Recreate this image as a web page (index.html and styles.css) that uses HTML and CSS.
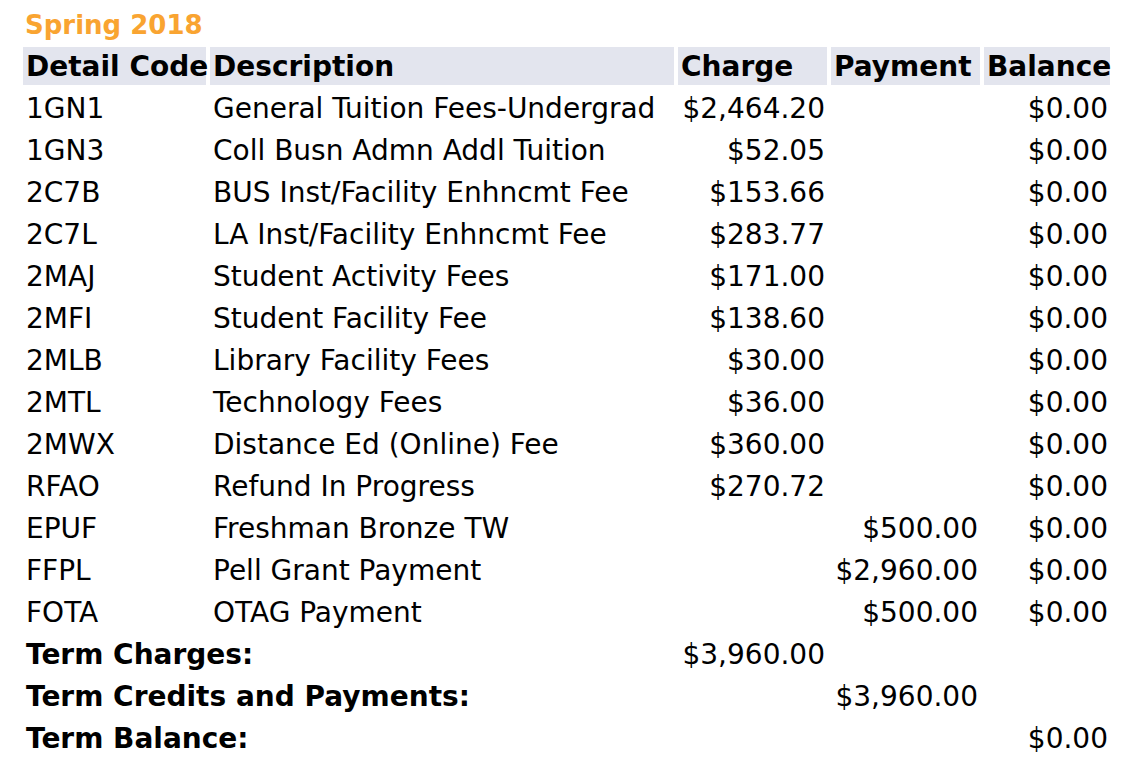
FILE: index.html
```html
<!DOCTYPE html>
<html>
<head>
<meta charset="utf-8">
<link rel="stylesheet" href="styles.css">
</head>
<body>
<div class="term-title">Spring 2018</div>
<table class="acct">
  <colgroup>
    <col class="c-code"><col class="c-desc"><col class="c-chg"><col class="c-pay"><col class="c-bal">
  </colgroup>
  <thead>
    <tr><th>Detail Code</th><th>Description</th><th>Charge</th><th>Payment</th><th>Balance</th></tr>
  </thead>
  <tbody>
    <tr><td>1GN1</td><td>General Tuition Fees-Undergrad</td><td class="num">$2,464.20</td><td></td><td class="num">$0.00</td></tr>
    <tr><td>1GN3</td><td>Coll Busn Admn Addl Tuition</td><td class="num">$52.05</td><td></td><td class="num">$0.00</td></tr>
    <tr><td>2C7B</td><td>BUS Inst/Facility Enhncmt Fee</td><td class="num">$153.66</td><td></td><td class="num">$0.00</td></tr>
    <tr><td>2C7L</td><td>LA Inst/Facility Enhncmt Fee</td><td class="num">$283.77</td><td></td><td class="num">$0.00</td></tr>
    <tr><td>2MAJ</td><td>Student Activity Fees</td><td class="num">$171.00</td><td></td><td class="num">$0.00</td></tr>
    <tr><td>2MFI</td><td>Student Facility Fee</td><td class="num">$138.60</td><td></td><td class="num">$0.00</td></tr>
    <tr><td>2MLB</td><td>Library Facility Fees</td><td class="num">$30.00</td><td></td><td class="num">$0.00</td></tr>
    <tr><td>2MTL</td><td>Technology Fees</td><td class="num">$36.00</td><td></td><td class="num">$0.00</td></tr>
    <tr><td>2MWX</td><td>Distance Ed (Online) Fee</td><td class="num">$360.00</td><td></td><td class="num">$0.00</td></tr>
    <tr><td>RFAO</td><td>Refund In Progress</td><td class="num">$270.72</td><td></td><td class="num">$0.00</td></tr>
    <tr><td>EPUF</td><td>Freshman Bronze TW</td><td></td><td class="num">$500.00</td><td class="num">$0.00</td></tr>
    <tr><td>FFPL</td><td>Pell Grant Payment</td><td></td><td class="num">$2,960.00</td><td class="num">$0.00</td></tr>
    <tr><td>FOTA</td><td>OTAG Payment</td><td></td><td class="num">$500.00</td><td class="num">$0.00</td></tr>
    <tr><th class="lbl" colspan="2">Term Charges:</th><td class="num">$3,960.00</td><td></td><td></td></tr>
    <tr><th class="lbl" colspan="2">Term Credits and Payments:</th><td></td><td class="num">$3,960.00</td><td></td></tr>
    <tr><th class="lbl" colspan="2">Term Balance:</th><td></td><td></td><td class="num">$0.00</td></tr>
  </tbody>
</table>
</body>
</html>
```
FILE: styles.css
```css
html, body {
  margin: 0;
  padding: 0;
  background: #ffffff;
}
body {
  padding: 10px 19px;
  font-family: "DejaVu Sans", Verdana, sans-serif;
  color: #000000;
}
.term-title {
  color: #f9a431;
  font-weight: bold;
  font-size: 26px;
  line-height: 30px;
  padding-left: 6px;
  margin-bottom: 3px;
}
.acct {
  border-collapse: separate;
  border-spacing: 4px;
  table-layout: fixed;
  width: 1095px;
  font-size: 28px;
}
.c-code { width: 183px; }
.c-desc { width: 464px; }
.c-chg { width: 149px; }
.c-pay { width: 149px; }
.c-bal { width: 126px; }
.acct th, .acct td {
  height: 38px;
  padding: 0 2px 0 3px;
  white-space: nowrap;
  text-align: left;
  vertical-align: middle;
  box-sizing: border-box;
}
.acct thead th {
  background: #e3e5ee;
  font-weight: bold;
}
.acct th.lbl {
  font-weight: bold;
}
.acct td.num {
  text-align: right;
}
```
